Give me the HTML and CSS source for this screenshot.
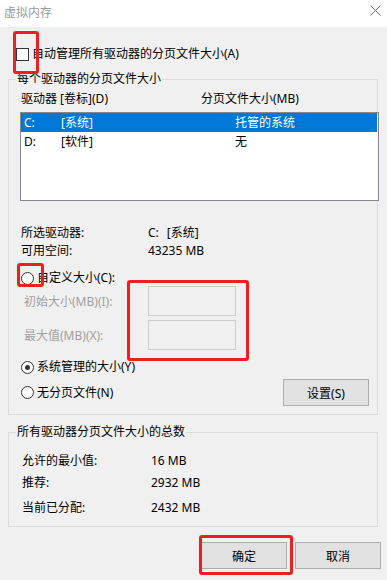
FILE: index.html
```html
<!DOCTYPE html>
<html lang="zh-CN">
<head>
<meta charset="utf-8">
<title>虚拟内存</title>
<link rel="stylesheet" href="styles.css">
</head>
<body>
<div class="window">
  <div class="titlebar">
    <span class="title">虚拟内存</span>
    <svg class="close" width="11" height="11" viewBox="0 0 11 11"><path d="M0.5 0.5 L10.5 10.5 M10.5 0.5 L0.5 10.5" stroke="#6f6f6f" stroke-width="1" fill="none"/></svg>
  </div>

  <div class="check-row">
    <span class="checkbox"></span>
    <span>自动管理所有驱动器的分页文件大小(A)</span>
  </div>

  <fieldset class="group g1">
    <legend>每个驱动器的分页文件大小</legend>
    <div class="list-head">
      <span>驱动器 [卷标](D)</span>
      <span>分页文件大小(MB)</span>
    </div>
    <div class="listbox">
      <div class="lrow selected"><span>C:</span><span>[系统]</span><span>托管的系统</span></div>
      <div class="lrow"><span>D:</span><span>[软件]</span><span>无</span></div>
    </div>
    <div class="info">
      <div class="info-row"><span>所选驱动器:</span><span><span class="drv">C:</span>[系统]</span></div>
      <div class="info-row"><span>可用空间:</span><span>43235 MB</span></div>
    </div>
    <div class="radio-row r-custom"><span class="radio"></span><span>自定义大小(C):</span></div>
    <div class="size-row first"><span class="disabled">初始大小(MB)(I):</span><span class="input"></span></div>
    <div class="size-row"><span class="disabled">最大值(MB)(X):</span><span class="input"></span></div>
    <div class="radio-row r-sys"><span class="radio checked"></span><span>系统管理的大小(Y)</span></div>
    <div class="last-row">
      <div class="radio-row"><span class="radio"></span><span>无分页文件(N)</span></div>
      <button class="btn btn-set">设置(S)</button>
    </div>
  </fieldset>

  <fieldset class="group g2">
    <legend>所有驱动器分页文件大小的总数</legend>
    <div class="total-row t1"><span>允许的最小值:</span><span>16 MB</span></div>
    <div class="total-row t2"><span>推荐:</span><span>2932 MB</span></div>
    <div class="total-row t3"><span>当前已分配:</span><span>2432 MB</span></div>
  </fieldset>

  <div class="buttons">
    <button class="btn">确定</button>
    <button class="btn">取消</button>
  </div>

  <div class="mark m1"></div>
  <div class="mark m2"></div>
  <div class="mark m3"></div>
  <div class="mark m4"></div>
</div>
</body>
</html>
```

FILE: styles.css
```css
* { box-sizing: border-box; }
html, body { margin: 0; padding: 0; }
body {
  background: #f0f0f0;
  font-family: "Noto Sans", "Noto Sans CJK SC", sans-serif;
  font-size: 12px;
  color: #000;
}
.window {
  position: relative;
  width: 387px;
  height: 580px;
  overflow: hidden;
  background: #f0f0f0;
}
.titlebar {
  height: 27px;
  background: #fff;
  display: flex;
  align-items: center;
  justify-content: space-between;
  padding: 0 6px 2px 4px;
}
.title {
  color: #9a9a9a;
  font-size: 12px;
  line-height: 16px;
}
.close { display: block; margin-top: -4px; }

.check-row {
  display: flex;
  align-items: center;
  height: 18px;
  margin-top: 18px;
  padding-left: 16px;
  line-height: 18px;
}
.checkbox {
  width: 13px;
  height: 13px;
  border: 1px solid #333;
  background: #fff;
  margin-right: 3px;
  flex: none;
}

.group {
  border: 1px solid #dcdcdc;
  margin: 0 9px 0 8px;
  padding: 0;
  min-width: 0;
}
.group legend {
  margin-left: 7px;
  padding: 0 1px;
  line-height: 16px;
  height: 16px;
}
.g1 { margin-top: 8px; padding-bottom: 8px; }

.list-head {
  display: grid;
  grid-template-columns: 180px 1fr;
  margin-top: 4px;
  padding-left: 12px;
  line-height: 16px;
}
.listbox {
  margin: 5px -2px 0 11px;
  height: 89px;
  border: 1px solid #828790;
  background: #fff;
}
.lrow {
  display: grid;
  grid-template-columns: 37px 174px 1fr;
  height: 19px;
  line-height: 19px;
  padding-left: 3px;
  margin-right: 1px;
}
.lrow.selected { background: #0078d7; color: #fff; }

.info { margin-top: 23px; padding-left: 12px; }
.info-row {
  display: grid;
  grid-template-columns: 127px 1fr;
  line-height: 18px;
}
.drv { margin-right: 8px; }

.radio-row {
  display: flex;
  align-items: center;
  height: 18px;
  line-height: 18px;
  padding-left: 12px;
}
.radio {
  width: 13px;
  height: 13px;
  border: 1px solid #333;
  border-radius: 50%;
  background: #fff;
  margin-right: 3px;
  flex: none;
  display: flex;
  align-items: center;
  justify-content: center;
}
.radio.checked::after {
  content: "";
  width: 5px;
  height: 5px;
  border-radius: 50%;
  background: #333;
}
.r-custom { margin-top: 9px; }
.size-row {
  display: grid;
  grid-template-columns: 124px 88px;
  align-items: center;
  height: 30px;
  margin-top: 4px;
  padding-left: 15px;
}
.size-row.first { margin-top: -1px; }
.disabled { color: #a0a0a0; }
.input {
  display: block;
  height: 30px;
  border: 1px solid #cccccc;
  background: #f0f0f0;
}
.r-sys { margin-top: 8px; }
.last-row {
  display: flex;
  align-items: center;
  justify-content: space-between;
  margin-top: 3px;
  padding-right: 8px;
}
.btn {
  width: 86px;
  height: 27px;
  border: 1px solid #adadad;
  background: #e1e1e1;
  font-family: "Noto Sans", "Noto Sans CJK SC", sans-serif;
  font-size: 12px;
  color: #000;
  padding: 0;
}

.g2 { margin-top: 9px; padding-bottom: 9px; }
.total-row {
  display: grid;
  grid-template-columns: 129px 1fr;
  line-height: 18px;
  padding-left: 13px;
}
.t1 { margin-top: 12px; }
.t2 { margin-top: 4px; }
.t3 { margin-top: 7px; }

.buttons {
  display: flex;
  justify-content: flex-end;
  gap: 8px;
  margin-top: 15px;
  padding-right: 6px;
}

.mark {
  position: absolute;
  border: 3px solid #f01e1e;
  border-radius: 3px;
}
.m1 { left: 13px; top: 31px; width: 26px; height: 43px; }
.m2 { left: 17px; top: 263px; width: 27px; height: 24px; }
.m3 { left: 127px; top: 280px; width: 122px; height: 81px; }
.m4 { left: 199px; top: 535px; width: 94px; height: 40px; }
```
